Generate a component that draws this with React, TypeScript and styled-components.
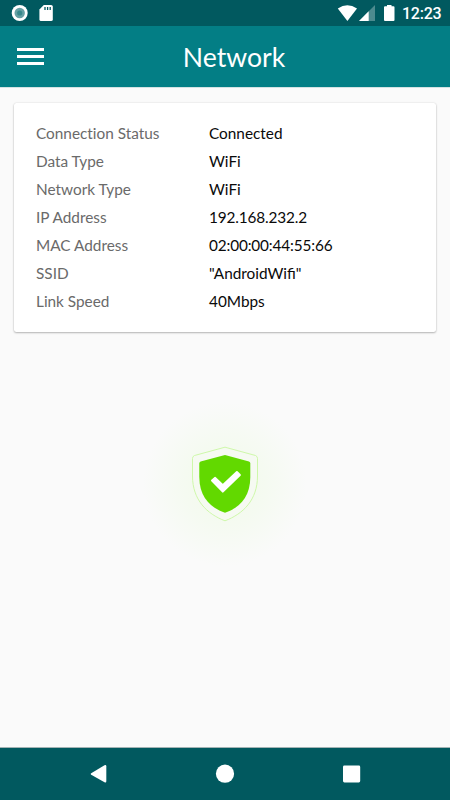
import React from "react";
import styled, { createGlobalStyle } from "styled-components";

const GlobalStyle = createGlobalStyle`
  * { box-sizing: border-box; }
  body { margin: 0; background: #fafafa; }
`;

const Screen = styled.div`
  display: flex;
  flex-direction: column;
  width: 450px;
  height: 800px;
  overflow: hidden;
  background: #fafafa;
  font-family: Lato, sans-serif;
`;

const StatusBar = styled.header`
  display: flex;
  justify-content: space-between;
  flex: 0 0 26px;
  background: #01595f;
  color: #fff;
`;

const StatusIcons = styled.svg`
  display: block;
  height: 26px;
`;

const StatusEnd = styled.div`
  display: flex;
  padding-right: 9px;
`;

const Clock = styled.span`
  width: 39px;
  height: 26px;
  font: 500 16px/27px Roboto, sans-serif;
  letter-spacing: -0.25px;
  white-space: nowrap;
`;

const AppBar = styled.div`
  display: grid;
  grid-template-columns: 79px 1fr 61px;
  align-items: center;
  flex: 0 0 61px;
  background: #037e85;
`;

const MenuButton = styled.button`
  display: flex;
  flex-direction: column;
  gap: 4px;
  width: 27px;
  margin: 0 0 0 17px;
  padding: 0;
  border: 0;
  background: none;
`;

const MenuLine = styled.span`
  height: 3.3px;
  background: #fff;
`;

const Title = styled.h1`
  margin: 0;
  color: #fff;
  font-size: 26.6px;
  font-weight: 400;
  line-height: 34px;
  text-align: center;
`;

const Content = styled.main`
  flex: 1;
  display: flex;
  flex-direction: column;
  align-items: center;
  border-top: 1px solid #d3e2e3;
  padding-top: 14.5px;
`;

const Card = styled.dl`
  width: 422px;
  height: 229.5px;
  margin: 0;
  padding: 16px 22px;
  border-radius: 2.5px;
  background: #fff;
  box-shadow: 0 1px 2px rgba(0, 0, 0, 0.26), 0 0 2px rgba(0, 0, 0, 0.12);
`;

const Row = styled.div`
  display: grid;
  grid-template-columns: 173px 1fr;
  height: 28.12px;
  font-size: 15.35px;
  line-height: 28px;
`;

const Label = styled.dt`
  color: #6a6a6a;
  font-variant-ligatures: none;
`;

const Value = styled.dd<{ $numeric: boolean }>`
  margin: 0;
  color: #0a0a0a;
  letter-spacing: ${({ $numeric }) => ($numeric ? "-0.15px" : "normal")};
`;

const Shield = styled.svg`
  display: block;
  width: 190px;
  height: 190px;
  margin-top: 58px;
`;

const NavBar = styled.nav`
  display: flex;
  align-items: center;
  justify-content: space-between;
  flex: 0 0 53px;
  padding: 0 86px 0 85px;
  background: #01595f;
  border-top: 1px solid #a3b3b4;
`;

const NavIcon = styled.svg`
  width: 26px;
  height: 26px;
  fill: #fff;
`;

const details = [
  { label: "Connection Status", value: "Connected" },
  { label: "Data Type", value: "WiFi" },
  { label: "Network Type", value: "WiFi" },
  { label: "IP Address", value: "192.168.232.2", numeric: true },
  { label: "MAC Address", value: "02:00:00:44:55:66", numeric: true },
  { label: "SSID", value: "\"AndroidWifi\"" },
  { label: "Link Speed", value: "40Mbps" },
];

export default function App() {
  return (
    <>
      <GlobalStyle />
      <Screen>
        <StatusBar>
          <StatusIcons width="60" viewBox="0 0 60 26">
            <circle cx="19.7" cy="13" r="8" fill="#fff" />
            <circle cx="19.7" cy="13" r="5.2" fill="#65a0a3" />
            <circle cx="19.7" cy="13" r="2.6" fill="#37888b" />
            <path d="M43.8 5h7.3q1.7 0 1.7 1.6v12.8q0 1.6-1.7 1.6H41q-1.6 0-1.6-1.6V9.4z" fill="#fff" />
            <path d="M45 7v3M47.6 7v3M50.2 7v3" stroke="#01595f" strokeWidth="1.3" />
          </StatusIcons>
          <StatusEnd>
            <StatusIcons width="65" viewBox="337 0 65 26">
              <path d="M337.8 8.4Q347.4 2 357 8.4L347.4 21z" fill="#fff" />
              <path d="M375 5v16h-16z" fill="#4d8b8f" />
              <path d="M368.7 11.3V21H359z" fill="#fff" />
              <path d="M387 5h4.500v1.200h2q1 0 1 1v12.700q0 1.100-1 1.100H385q-1 0-1-1.100V7.200q0-1 1-1h2z" fill="#fff" />
            </StatusIcons>
            <Clock>12:23</Clock>
          </StatusEnd>
        </StatusBar>
        <AppBar>
          <MenuButton aria-label="Menu">
            <MenuLine />
            <MenuLine />
            <MenuLine />
          </MenuButton>
          <Title>Network</Title>
        </AppBar>
        <Content>
          <Card>
            {details.map(({ label, value, numeric }) => (
              <Row key={label}>
                <Label>{label}</Label>
                <Value $numeric={Boolean(numeric)}>{value}</Value>
              </Row>
            ))}
          </Card>
          <Shield viewBox="130 390 190 190">
            <defs>
              <radialGradient id="glow">
                <stop offset="0" stopColor="#f2faea" />
                <stop offset="0.5" stopColor="#f5faf1" />
                <stop offset="1" stopColor="#fafafa" />
              </radialGradient>
            </defs>
            <circle cx="225" cy="484" r="82" fill="url(#glow)" />
            <path d="M225 447.200L255.500 455.500Q257.500 456.300 257.500 458.500V476C257.500 500 243 514 225 520.800C207 514 192.500 500 192.500 476V458.500Q192.500 456.300 194.500 455.500Z" fill="#f6faf2" stroke="#c9f7a2" strokeWidth="0.9" />
            <path d="M225 455L249 461.600Q250.300 462 250.300 463.500V477C250.300 498 238.500 508 225 512.800C211.500 508 199.300 498 199.300 477V463.500Q199.300 462 200.600 461.600Z" fill="#62d900" />
            <path d="M212 480.500L215.200 477.900L222.800 485.200L236.900 472L239.900 475L222.800 491.600Z" fill="#fff" stroke="#fff" strokeWidth="2" strokeLinejoin="round" />
          </Shield>
        </Content>
        <NavBar>
          <NavIcon viewBox="0 0 26 26">
            <path d="M6.200 12.200L19.500 4.200Q21.300 3.300 21.300 5.200V20.200Q21.300 22.300 19.500 21.300L6.200 13.800Q5 13 6.200 12.200Z" />
          </NavIcon>
          <NavIcon viewBox="0 0 26 26">
            <circle cx="13" cy="12.700" r="9.100" />
          </NavIcon>
          <NavIcon viewBox="0 0 26 26">
            <rect x="5" y="4.600" width="17.200" height="16.800" rx="1.400" />
          </NavIcon>
        </NavBar>
      </Screen>
    </>
  );
}
